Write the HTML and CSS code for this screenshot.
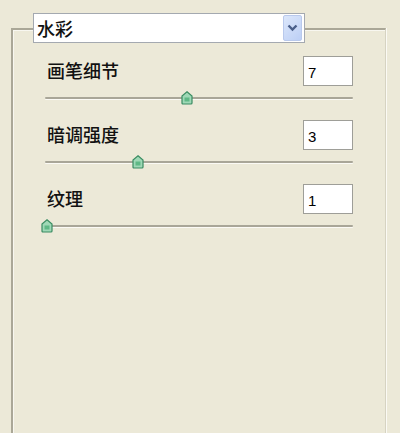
FILE: index.html
```html
<!DOCTYPE html>
<html lang="zh-CN">
<head>
    <meta charset="UTF-8">
    <meta name="viewport" content="width=device-width, initial-scale=1.0">
    <title>水彩</title>
    <link rel="stylesheet" href="styles.css">
</head>
<body>
    <div class="group">
        <div class="select">
            <span class="select-text">水彩</span>
            <span class="select-btn">
                <svg width="11" height="8" viewBox="0 0 11 8"><path d="M1.5 1.5 L5.5 5.5 L9.5 1.5" fill="none" stroke="#4a5f8a" stroke-width="2.4"/></svg>
            </span>
        </div>

        <div class="rows">
            <div class="row">
                <div class="row-head">
                    <label for="detail">画笔细节</label>
                    <input type="text" id="detail" class="num" value="7">
                </div>
                <div class="slider">
                    <div class="track"></div>
                    <span class="thumb" style="left: 136px"><svg width="12" height="14" viewBox="0 0 12 14"><path d="M6 0.8 L11 5 V12 Q11 13 10 13 H2 Q1 13 1 12 V5 Z" fill="#9fd8b6" stroke="#3a8c62" stroke-width="1.2"/><path d="M3.5 6.5 H8.5 V10.5 H3.5 Z" fill="#5fb886"/></svg></span>
                </div>
            </div>
            <div class="row">
                <div class="row-head">
                    <label for="shadow">暗调强度</label>
                    <input type="text" id="shadow" class="num" value="3">
                </div>
                <div class="slider">
                    <div class="track"></div>
                    <span class="thumb" style="left: 87px"><svg width="12" height="14" viewBox="0 0 12 14"><path d="M6 0.8 L11 5 V12 Q11 13 10 13 H2 Q1 13 1 12 V5 Z" fill="#9fd8b6" stroke="#3a8c62" stroke-width="1.2"/><path d="M3.5 6.5 H8.5 V10.5 H3.5 Z" fill="#5fb886"/></svg></span>
                </div>
            </div>
            <div class="row">
                <div class="row-head">
                    <label for="texture">纹理</label>
                    <input type="text" id="texture" class="num" value="1">
                </div>
                <div class="slider">
                    <div class="track"></div>
                    <span class="thumb" style="left: -4px"><svg width="12" height="14" viewBox="0 0 12 14"><path d="M6 0.8 L11 5 V12 Q11 13 10 13 H2 Q1 13 1 12 V5 Z" fill="#9fd8b6" stroke="#3a8c62" stroke-width="1.2"/><path d="M3.5 6.5 H8.5 V10.5 H3.5 Z" fill="#5fb886"/></svg></span>
                </div>
            </div>
        </div>
    </div>
</body>
</html>
```

FILE: styles.css
```css
body {
    margin: 0;
    background: #ece9d8;
    font-family: 'Noto Sans CJK SC', 'Liberation Sans', sans-serif;
    color: #111;
    overflow: hidden;
}

.group {
    margin: 28px 14px 0 11px;
    min-height: 420px;
    border-top: 2px solid #aaa797;
    border-left: 2px solid #aaa797;
    border-right: 1px solid #d6d3c2;
    box-shadow: inset 1px 1px 0 #f8f7f0, 1px 0 0 #fbfaf4;
}

.select {
    display: flex;
    align-items: center;
    justify-content: space-between;
    box-sizing: border-box;
    width: 272px;
    height: 30px;
    margin: -17px 0 0 20px;
    background: #fff;
    border: 1px solid #a4a9b0;
    padding: 1px 2px 1px 3px;
}

.select-text {
    font-size: 18px;
    font-weight: 500;
    line-height: 1;
}

.select-btn {
    display: flex;
    align-items: center;
    justify-content: center;
    width: 19px;
    height: 26px;
    box-sizing: border-box;
    border: 1px solid #b9c9ec;
    border-radius: 2px;
    background: linear-gradient(135deg, #dce7fb 0%, #bccff5 100%);
}

.rows {
    display: flex;
    flex-direction: column;
    gap: 10px;
    width: 308px;
    margin: 13px 0 0 32px;
}

.row-head {
    display: flex;
    align-items: center;
    justify-content: space-between;
    height: 30px;
}

.row-head label {
    font-size: 18px;
    font-weight: 500;
    padding-left: 2px;
    padding-bottom: 3px;
}

.num {
    box-sizing: border-box;
    width: 50px;
    height: 30px;
    margin: 0;
    padding: 2px 4px 0;
    border: 1px solid #9e9e98;
    background: #fff;
    font-family: 'Liberation Sans', Arial, sans-serif;
    font-size: 15px;
    color: #000;
    outline: none;
}

.slider {
    position: relative;
    height: 24px;
    display: flex;
    align-items: center;
}

.track {
    flex: 1;
    height: 2px;
    background: #a9a698;
    border-radius: 2px;
    box-shadow: 0 1px 0 #fbfaf5;
}

.thumb {
    position: absolute;
    top: 5px;
    display: block;
    width: 12px;
    height: 14px;
}

.thumb svg {
    display: block;
}
```
